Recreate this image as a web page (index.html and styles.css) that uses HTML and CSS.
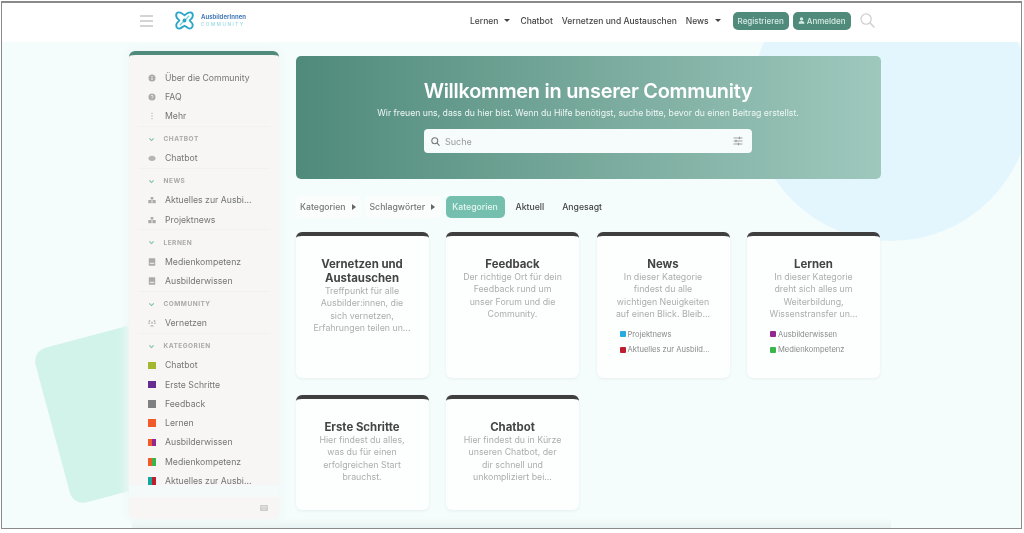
FILE: index.html
```html
<!DOCTYPE html>
<html lang="de">
<head>
<meta charset="utf-8">
<title>AusbilderInnen Community</title>
<link rel="stylesheet" href="styles.css">
</head>
<body>
<div class="frame">
  <div class="deco-circle"></div>
  <div class="deco-square"></div>
  <div class="deco-fade"></div>
  <header class="topbar">
    <div class="burger"><span></span><span></span><span></span></div>
    <div class="logo">
      <svg class="logo-mark" viewBox="0 0 20 20" fill="none" stroke="#2ba6c9" stroke-width="2">
        <path d="M3.5 1.5C6 1 8 3 10 4.5C12 3 14 1 16.5 1.5C18.5 2 19 4 18.5 6C18 8 16.5 8.500 15.500 10C16.500 11.500 18 12 18.500 14C19 16.500 17.500 18.500 15.500 18.500C13.500 18.500 12 16.500 10 15.500C8 16.500 6.500 18.500 4 18.500C2 18.500 1 16.500 1.500 14C2 12 3.500 11.500 4.500 10C3.500 8.500 2 8 1.500 6C1 4 1.500 2 3.500 1.500Z"/>
        <path d="M5 15L15 5" stroke="#7ed3dc" stroke-width="1.400"/>
        <circle cx="10" cy="10" r="2" fill="#2ba6c9" stroke="none"/>
      </svg>
      <div class="logo-text"><b>AusbilderInnen</b><span>COMMUNITY</span></div>
    </div>
    <nav class="topnav">
      <a class="has-caret">Lernen</a>
      <a>Chatbot</a>
      <a>Vernetzen und Austauschen</a>
      <a class="has-caret">News</a>
    </nav>
    <button class="btn">Registrieren</button>
    <button class="btn btn-login">
      <svg viewBox="0 0 10 10" fill="currentColor"><circle cx="5" cy="2.800" r="2.300"/><path d="M.8 9.500C.8 6.800 2.500 5.800 5 5.800S9.200 6.800 9.200 9.500Z"/></svg>
      Anmelden
    </button>
    <svg class="top-search" viewBox="0 0 16 16" fill="none" stroke="#cfcfcf" stroke-width="1.300"><circle cx="6.500" cy="6.500" r="5.500"/><path d="M10.500 10.500L15.500 15.500" stroke-width="1.600"/></svg>
  </header>

  <div class="content">
    <aside class="sidebar">
      <div class="side-scroll">
        <section class="side-sec side-first">
          <a class="row"><svg class="ico" viewBox="0 0 8 8"><circle cx="4" cy="4" r="3.500" fill="#aaa"/><rect x="3.500" y="3.500" width="1" height="2.500" fill="#f7f6f5"/><rect x="3.500" y="2" width="1" height="1" fill="#f7f6f5"/></svg>Über die Community</a>
          <a class="row"><svg class="ico" viewBox="0 0 8 8"><circle cx="4" cy="4" r="3.500" fill="#aaa"/><path d="M2.800 3.200C2.800 1.800 5.200 1.800 5.200 3.200C5.200 4 4 4 4 5" stroke="#f7f6f5" stroke-width=".8" fill="none"/><rect x="3.600" y="5.500" width=".8" height=".8" fill="#f7f6f5"/></svg>FAQ</a>
          <a class="row"><svg class="ico" viewBox="0 0 8 8" fill="#bbb"><circle cx="4" cy="1.200" r=".7"/><circle cx="4" cy="4" r=".7"/><circle cx="4" cy="6.800" r=".7"/></svg>Mehr</a>
        </section>
        <section class="side-sec">
          <h3 class="sec-head"><svg class="chev" viewBox="0 0 8 8"><path d="M1.500 2.800L4 5.200L6.500 2.800"/></svg>Chatbot</h3>
          <a class="row"><svg class="ico" viewBox="0 0 8 8"><ellipse cx="4" cy="4.300" rx="3.500" ry="2.600" fill="#b5b5b5"/></svg>Chatbot</a>
        </section>
        <section class="side-sec">
          <h3 class="sec-head"><svg class="chev" viewBox="0 0 8 8"><path d="M1.500 2.800L4 5.200L6.500 2.800"/></svg>News</h3>
          <a class="row"><svg class="ico" viewBox="0 0 8 8" fill="#aaa"><rect x="2.700" y="1" width="2.600" height="2.500"/><rect x=".3" y="4" width="3.300" height="3.200"/><rect x="4.400" y="4" width="3.300" height="3.200"/></svg>Aktuelles zur Ausbi...</a>
          <a class="row"><svg class="ico" viewBox="0 0 8 8" fill="#aaa"><rect x="2.700" y="1" width="2.600" height="2.500"/><rect x=".3" y="4" width="3.300" height="3.200"/><rect x="4.400" y="4" width="3.300" height="3.200"/></svg>Projektnews</a>
        </section>
        <section class="side-sec">
          <h3 class="sec-head"><svg class="chev" viewBox="0 0 8 8"><path d="M1.500 2.800L4 5.200L6.500 2.800"/></svg>Lernen</h3>
          <a class="row"><svg class="ico" viewBox="0 0 8 8"><rect x=".8" y=".3" width="6.400" height="7.400" fill="#aaa"/><rect x="1.800" y="4.800" width="4.400" height="1" fill="#f7f6f5"/></svg>Medienkompetenz</a>
          <a class="row"><svg class="ico" viewBox="0 0 8 8"><rect x=".8" y=".3" width="6.400" height="7.400" fill="#aaa"/><rect x="1.800" y="4.800" width="4.400" height="1" fill="#f7f6f5"/></svg>Ausbilderwissen</a>
        </section>
        <section class="side-sec">
          <h3 class="sec-head"><svg class="chev" viewBox="0 0 8 8"><path d="M1.500 2.800L4 5.200L6.500 2.800"/></svg>Community</h3>
          <a class="row"><svg class="ico" viewBox="0 0 8 8" fill="#bbb"><circle cx="1.500" cy="2" r="1"/><circle cx="6.500" cy="2" r="1"/><circle cx="4" cy="3.800" r="1"/><path d="M2.300 7.500C2.300 5.500 5.700 5.500 5.700 7.500Z"/><rect x=".3" y="3.500" width="1.600" height="1.500"/><rect x="6.100" y="3.500" width="1.600" height="1.500"/></svg>Vernetzen</a>
        </section>
        <section class="side-sec side-last">
          <h3 class="sec-head"><svg class="chev" viewBox="0 0 8 8"><path d="M1.500 2.800L4 5.200L6.500 2.800"/></svg>Kategorien</h3>
          <a class="row"><i class="sq c-lime"></i>Chatbot</a>
          <a class="row"><i class="sq c-purple"></i>Erste Schritte</a>
          <a class="row"><i class="sq c-gray"></i>Feedback</a>
          <a class="row"><i class="sq c-orange"></i>Lernen</a>
          <a class="row"><i class="sq c-or-pu"></i>Ausbilderwissen</a>
          <a class="row"><i class="sq c-or-gr"></i>Medienkompetenz</a>
          <a class="row"><i class="sq c-te-re"></i>Aktuelles zur Ausbi...</a>
        </section>
      </div>
      <div class="side-foot">
        <svg class="kbd" viewBox="0 0 8 6"><rect width="8" height="6" rx=".8" fill="#ccc"/><rect x="1" y="1" width="6" height=".7" fill="#e6e6e6"/><rect x="1" y="2.500" width="6" height=".7" fill="#e6e6e6"/><rect x="2" y="4" width="4" height=".7" fill="#e6e6e6"/></svg>
      </div>
    </aside>

    <main class="main">
      <section class="hero">
        <h1>Willkommen in unserer Community</h1>
        <p>Wir freuen uns, dass du hier bist. Wenn du Hilfe benötigst, suche bitte, bevor du einen Beitrag erstellst.</p>
        <div class="search">
          <svg class="s-ico" viewBox="0 0 10 10" fill="none" stroke="#777" stroke-width="1.200"><circle cx="4.200" cy="4.200" r="3.300"/><path d="M6.700 6.700L9.500 9.500"/></svg>
          <span class="s-text">Suche</span>
          <svg class="s-opts" viewBox="0 0 10 10" fill="none" stroke="#999" stroke-width=".9"><path d="M.5 2H9.500M.5 5H9.500M.5 8H9.500"/><path d="M6.500 .8V3.200M3 3.800V6.200M5.500 6.800V9.200" stroke-width="1.200"/></svg>
        </div>
      </section>

      <div class="tabs">
        <button class="drop">Kategorien<i class="tri"></i></button>
        <button class="drop">Schlagwörter<i class="tri"></i></button>
        <a class="tab tab-on">Kategorien</a>
        <a class="tab">Aktuell</a>
        <a class="tab">Angesagt</a>
      </div>

      <div class="grid">
        <article class="card">
          <h2>Vernetzen und Austauschen</h2>
          <p>Treffpunkt für alle Ausbilder:innen, die sich vernetzen, Erfahrungen teilen un...</p>
        </article>
        <article class="card">
          <h2>Feedback</h2>
          <p>Der richtige Ort für dein Feedback rund um unser Forum und die Community.</p>
        </article>
        <article class="card">
          <h2>News</h2>
          <p>In dieser Kategorie findest du alle wichtigen Neuigkeiten auf einen Blick. Bleib...</p>
          <ul class="subs">
            <li><i class="dot d-blue"></i>Projektnews</li>
            <li><i class="dot d-red"></i>Aktuelles zur Ausbild...</li>
          </ul>
        </article>
        <article class="card">
          <h2>Lernen</h2>
          <p>In dieser Kategorie dreht sich alles um Weiterbildung, Wissenstransfer un...</p>
          <ul class="subs">
            <li><i class="dot d-purple"></i>Ausbilderwissen</li>
            <li><i class="dot d-green"></i>Medienkompetenz</li>
          </ul>
        </article>
        <article class="card">
          <h2>Erste Schritte</h2>
          <p>Hier findest du alles, was du für einen erfolgreichen Start brauchst.</p>
        </article>
        <article class="card">
          <h2>Chatbot</h2>
          <p>Hier findest du in Kürze unseren Chatbot, der dir schnell und unkompliziert bei...</p>
        </article>
      </div>
    </main>
  </div>
</div>
</body>
</html>
```
FILE: styles.css
```css
* { box-sizing: border-box; }
html, body { margin: 0; padding: 0; background: #fff; }
body { width: 1024px; height: 533px; overflow: hidden; font-family: Inter, "Liberation Sans", sans-serif; }

.frame {
  position: relative;
  width: 1021px;
  height: 528px;
  margin: 1px 0 0 1px;
  border: 1px solid #8a8a8a;
  border-top-width: 2px;
  background: #f5fcfc;
  overflow: hidden;
  filter: blur(.45px);
}
.deco-circle {
  position: absolute;
  left: 749px;
  top: -42px;
  width: 280px;
  height: 280px;
  border-radius: 50%;
  background: #e3f6fe;
}
.deco-square {
  position: absolute;
  left: 48px;
  top: 325px;
  width: 160px;
  height: 160px;
  border-radius: 14px;
  background: #d2f3ea;
  transform: rotate(-15deg);
}
.deco-fade {
  position: absolute;
  left: 130px;
  right: 130px;
  bottom: 0;
  height: 10px;
  background: linear-gradient(#f5fcfc00, #e9f2f2);
}

.topbar {
  position: relative;
  height: 39px;
  display: flex;
  align-items: center;
  padding: 0 0 4px 138px;
  background: #fff;
}
.burger { width: 13px; display: flex; flex-direction: column; gap: 3px; }
.burger span { height: 2px; background: #d4d4d4; }
.logo { display: flex; align-items: center; margin-left: 22px; gap: 7px; }
.logo-mark { width: 19px; height: 19px; display: block; }
.logo-text { display: flex; flex-direction: column; gap: 2px; width: 50px; }
.logo-text b { font-size: 6px; line-height: 6px; color: #4a7cb8; font-weight: 700; }
.logo-text span { font-size: 4.500px; line-height: 5px; letter-spacing: 1.650px; color: #7fd3dc; }

.topnav { display: flex; margin-left: 219px; gap: 9px; font-size: 8.500px; color: #454545; font-weight: 500; }
.has-caret { display: flex; align-items: center; gap: 6px; margin-right: 1px; }
.has-caret::after { content: ""; border: 3.500px solid transparent; border-top-color: #444; border-bottom: 0; }
.btn {
  height: 18px;
  margin: 0;
  padding: 0;
  width: 56px;
  margin-left: 11px;
  border: 0;
  border-radius: 5px;
  background: #4f8a7a;
  color: #d8ece6;
  font: 500 8px Inter, "Liberation Sans", sans-serif;
  display: flex;
  align-items: center;
  justify-content: center;
  gap: 2px;
}
.btn-login { width: 58px; margin-left: 4px; }
.btn-login svg { width: 7px; height: 7px; }
.top-search { width: 15px; height: 15px; margin-left: 9px; }

.content { position: relative; display: flex; gap: 16.500px; padding-left: 127px; align-items: flex-start; }

.sidebar {
  position: relative;
  width: 150px;
  height: 468px;
  margin-top: 9px;
  background: #f7f6f5;
  border-top: 4px solid #4f8a7a;
  border-radius: 6px;
  box-shadow: 0 0 8px 3px #f0f8f7;
  display: flex;
  flex-direction: column;
}
.side-scroll { height: 442px; overflow: hidden; padding: 13px 9px 0; position: relative; }
.side-scroll::after {
  content: "";
  position: absolute;
  left: 0;
  right: 0;
  bottom: 0;
  height: 12px;
  background: #f4faf9;
}
.side-foot { flex: 1; display: flex; justify-content: flex-end; align-items: center; padding-right: 11px; }
.kbd { width: 8px; height: 6px; }
.side-sec { border-bottom: 1px solid #f2f1f0; padding: 2.800px 0 0; }
.side-first { padding-top: 0; }
.side-last { border-bottom: 0; }
.row {
  display: flex;
  align-items: center;
  height: 19.300px;
  padding-left: 10px;
  font-size: 8.700px;
  color: #757575;
  gap: 9px;
  white-space: nowrap;
}
.ico { width: 8px; height: 8px; flex: none; }
.sq { width: 8px; height: 7.500px; flex: none; display: block; }
.c-lime { background: #a3b82e; }
.c-purple { background: #662d91; }
.c-gray { background: #808080; }
.c-orange { background: #f15a29; }
.c-or-pu { background: linear-gradient(90deg, #f15a29 50%, #92278f 50%); }
.c-or-gr { background: linear-gradient(90deg, #f15a29 50%, #39b54a 50%); }
.c-te-re { background: linear-gradient(90deg, #12a89d 50%, #be1e2d 50%); }
.sec-head {
  display: flex;
  align-items: center;
  height: 19px;
  margin: 0;
  padding-left: 10px;
  gap: 8.500px;
  font-size: 6.500px;
  font-weight: 700;
  letter-spacing: .5px;
  text-transform: uppercase;
  color: #a9a9a9;
}
.chev { width: 7px; height: 7px; fill: none; stroke: #74bfae; stroke-width: 1.200; }

.main { width: 585px; padding-top: 14px; }
.hero {
  height: 123px;
  border-radius: 5px;
  background: linear-gradient(90deg, #4f8a7a, #9fc8bd);
  color: #fff;
  display: flex;
  flex-direction: column;
  align-items: center;
  padding-top: 22px;
}
.hero h1 { margin: 0; font-size: 19.900px; line-height: 26px; font-weight: 600; letter-spacing: -.25px; }
.hero p { margin: 3px 0 0; font-size: 8.700px; line-height: 12px; color: #eef7f4; }
.search {
  width: 328px;
  height: 24px;
  margin-top: 10px;
  background: #f5fcfb;
  border-radius: 4px;
  display: flex;
  align-items: center;
  padding: 0 9px 0 7px;
}
.s-ico { width: 9px; height: 9px; }
.s-text { flex: 1; margin-left: 5px; font-size: 9px; color: #9a9a9a; }
.s-opts { width: 10px; height: 10px; }

.tabs { display: flex; align-items: center; height: 22px; margin: 16.500px 0 14.500px; font-size: 8.700px; }
.drop {
  height: 22px;
  border: 0;
  border-radius: 5px;
  background: #fbfdfd;
  color: #777;
  font: 500 8.700px Inter, "Liberation Sans", sans-serif;
  padding: 0 0 0 4.500px;
  display: flex;
  align-items: center;
  gap: 6px;
  width: 65px;
  margin-right: 4px;
}
.drop + .drop { width: 76px; margin-right: 5px; padding-left: 5px; }
.tri { border: 3px solid transparent; border-left: 4px solid #666; border-right: 0; }
.tab { padding: 0 7px; height: 22px; display: flex; align-items: center; color: #444; font-weight: 500; margin-right: 4px; }
.tab-on { background: #74bfae; color: #e5f6f1; border-radius: 5px; width: 59px; justify-content: center; padding: 0; margin-right: 4px; }

.grid { display: grid; grid-template-columns: repeat(4, 133px); grid-template-rows: 146px 115px; gap: 17px 17.500px; }
.card {
  background: #fdfefe;
  border-top: 4px solid #3f3f3f;
  border-radius: 6px;
  box-shadow: 0 1px 3px #e5eeee;
  padding: 21px 16px 0;
  text-align: center;
}
.card h2 { margin: 0; font-size: 11.400px; line-height: 14px; font-weight: 700; color: #444; }
.card p { margin: 0; font-size: 8.800px; line-height: 12.300px; color: #adadad; }
.subs { list-style: none; margin: 6px -6px 0 7px; padding: 0; text-align: left; }
.subs li { display: flex; align-items: center; height: 15.700px; font-size: 7.600px; color: #8a8a8a; white-space: nowrap; gap: 2px; }
.dot { width: 6px; height: 6px; border-radius: 1px; display: block; flex: none; }
.d-blue { background: #27aae1; }
.d-red { background: #be1e2d; }
.d-purple { background: #92278f; }
.d-green { background: #39b54a; }
```
